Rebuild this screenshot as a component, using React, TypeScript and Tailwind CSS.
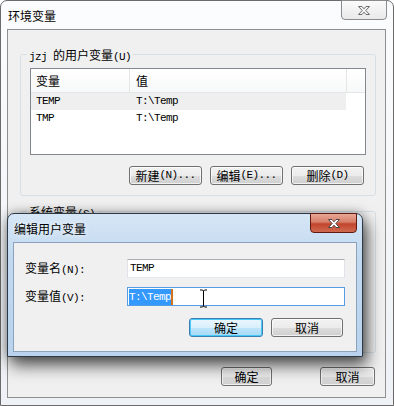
import React from "react";

const cjk = "font-['Noto_Sans_CJK_SC',sans-serif] text-[12px]";
const mono = "font-['Liberation_Mono','Noto_Sans_CJK_SC',monospace] text-[11px] tracking-[-0.6px]";

function Mix({ text }: { text: string }) {
  const parts = text.split(/([\x20-\x7e]+)/).filter(Boolean);
  return (
    <>
      {parts.map((part, i) =>
        /^[\x20-\x7e]+$/.test(part) ? (
          <span key={i} className={mono}>
            {part}
          </span>
        ) : (
          <span key={i} className={cjk}>
            {part}
          </span>
        )
      )}
    </>
  );
}

function CloseX({ fill, stroke }: { fill: string; stroke: string }) {
  return (
    <svg width="14" height="11" viewBox="0 0 14 11">
      <path
        d="M1.5 1.5 H5 L7 3.8 L9 1.5 H12.5 L8.8 5.5 L12.5 9.5 H9 L7 7.2 L5 9.5 H1.5 L5.2 5.5 Z"
        fill={fill}
        stroke={stroke}
        strokeWidth="1"
        strokeLinejoin="round"
      />
    </svg>
  );
}

function Btn({ label, className = "" }: { label: string; className?: string }) {
  return (
    <div
      className={`flex h-[19px] items-center justify-center rounded-[3px] border border-[#707070] bg-[linear-gradient(#f2f2f2_0%,#ebebeb_50%,#dddddd_51%,#cfcfcf_100%)] leading-[15px] text-black shadow-[inset_0_0_0_1px_rgba(255,255,255,0.7)] ${className}`}
    >
      <Mix text={label} />
    </div>
  );
}

function GroupBox({
  label,
  className = "",
  children,
}: {
  label: string;
  className?: string;
  children?: React.ReactNode;
}) {
  return (
    <div className={`relative rounded-[3px] border border-[#d5dfe5] ${className}`}>
      <div className="absolute -top-[9px] left-[6px] bg-[#f0f0f0] px-[2px] leading-[16px] text-black">
        <Mix text={label} />
      </div>
      {children}
    </div>
  );
}

const rows = [
  { name: "TEMP", value: "T:\\Temp", selected: true },
  { name: "TMP", value: "T:\\Temp", selected: false },
];

export default function App() {
  return (
    <div className="relative h-[406px] w-[394px] overflow-hidden bg-white">
      {/* main window: 环境变量 */}
      <div className="flex h-full w-full flex-col rounded-t-[7px] border border-[#6b6b6b] bg-[linear-gradient(180deg,#fbfcfd,#eef2f6)]">
        <div className="flex h-[28px] shrink-0 items-start justify-between pl-[7px] pr-[6px]">
          <div className={`mt-[7px] leading-[16px] text-black [text-shadow:0_0_6px_#fff] ${cjk}`}>环境变量</div>
          <div className="-mt-px flex h-[20px] w-[46px] items-center justify-center rounded-b-[4px] border border-[#8c8c8c] bg-[linear-gradient(#fbfbfb,#e9e9e9)]">
            <CloseX fill="#f2f2f2" stroke="#6e6e6e" />
          </div>
        </div>

        <div className="mb-[7px] ml-[6px] mr-[7px] flex-1 border border-[#8e8f8f] bg-[#f0f0f0]">
          <GroupBox label="jzj 的用户变量(U)" className="ml-[12px] mt-[24px] h-[142px] w-[356px]">
            <div className="ml-[9px] mt-[13px] h-[87px] w-[336px] border border-[#828790] bg-white">
              <div className="flex h-[24px] border-b border-[#e5e5e5] bg-[linear-gradient(#ffffff,#f7f8f9)] text-black">
                <div className={`flex w-[98px] items-center pl-[5px] ${cjk}`}>变量</div>
                <div className={`flex w-[217px] items-center border-l border-[#e5e5e5] pl-[6px] ${cjk}`}>值</div>
                <div className="flex-1 border-l border-[#e5e5e5]" />
              </div>
              {rows.map((row) => (
                <div
                  key={row.name}
                  className={`flex h-[17px] w-[315px] items-center text-black ${row.selected ? "bg-[#efefef]" : ""}`}
                >
                  <div className={`w-[98px] pl-[5px] ${mono}`}>{row.name}</div>
                  <div className={`pl-[7px] ${mono}`}>{row.value}</div>
                </div>
              ))}
            </div>
            <div className="ml-[108px] mt-[11px] flex gap-[8px]">
              <Btn label="新建(N)..." className="w-[73px]" />
              <Btn label="编辑(E)..." className="w-[73px]" />
              <Btn label="删除(D)" className="w-[73px]" />
            </div>
          </GroupBox>

          <GroupBox label="系统变量(S)" className="ml-[12px] mt-[15px] h-[142px] w-[356px]" />

          <div className="mt-[14px] flex">
            <Btn label="确定" className="ml-[213px] w-[51px]" />
            <Btn label="取消" className="ml-[48px] w-[55px]" />
          </div>
        </div>
      </div>

      {/* dialog: 编辑用户变量 */}
      <div className="absolute left-[7px] top-[213px] flex h-[144px] w-[356px] flex-col rounded-t-[7px] border border-[#2c3a48] bg-[linear-gradient(180deg,#d6e6f6_0%,#c2d9f0_30%,#b9d3ee_100%)] shadow-[0_0_12px_rgba(0,0,0,0.35),4px_9px_16px_rgba(0,0,0,0.6)]">
        <div className="flex h-[28px] shrink-0 items-start justify-between pl-[6px] pr-[5px]">
          <div className={`mt-[7px] leading-[16px] text-black [text-shadow:0_0_6px_#fff] ${cjk}`}>编辑用户变量</div>
          <div className="-mt-px flex h-[20px] w-[47px] items-center justify-center rounded-b-[4px] border border-[#5e1a10] bg-[linear-gradient(#e9a797_0%,#d77e68_45%,#c2452d_55%,#cf6a4f_100%)]">
            <CloseX fill="#ffffff" stroke="#4a4a4a" />
          </div>
        </div>

        <div className="relative mb-[4px] ml-[5px] mr-[5px] h-[110px] border border-[#8aa2bc] bg-[#f0f0f0]">
          <div className="mt-[16px] grid grid-cols-[102px_218px] items-center gap-y-[9px] pl-[11px]">
            <div className="leading-[16px] text-black">
              <Mix text="变量名(N):" />
            </div>
            <div className="flex h-[19px] items-center border border-[#abadb3] border-x-[#e2e3ea] border-b-[#e3e9ef] bg-white pl-[2px] text-black">
              <span className={mono}>TEMP</span>
            </div>
            <div className="leading-[16px] text-black">
              <Mix text="变量值(V):" />
            </div>
            <div className="flex h-[19px] items-center border border-[#569de5] bg-white pl-px">
              <span className={`bg-[#3399ff] leading-[16px] text-white ${mono}`}>T:\Temp</span>
              <span className="h-[16px] w-[2px] bg-[#d0731c]" />
            </div>
          </div>

          <div className="mt-[12px] flex justify-end gap-[8px] pr-[13px]">
            <div
              className={`flex h-[19px] w-[74px] items-center justify-center rounded-[3px] border border-[#3c7fb1] bg-[linear-gradient(#eaf6fd_0%,#d9f0fc_50%,#bee6fd_51%,#a7d9f5_100%)] text-black shadow-[inset_0_0_0_1px_#48c8f7] ${cjk}`}
            >
              确定
            </div>
            <Btn label="取消" className="w-[72px]" />
          </div>

          {/* text cursor */}
          <svg className="absolute left-[185px] top-[46px]" width="9" height="19" viewBox="0 0 9 19">
            <path d="M1 1 H3.5 L4.5 2 L5.5 1 H8 M4.5 2 V17 M1 18 H3.5 L4.5 17 L5.5 18 H8" stroke="#000" strokeWidth="1" fill="none" />
          </svg>
        </div>
      </div>
    </div>
  );
}
